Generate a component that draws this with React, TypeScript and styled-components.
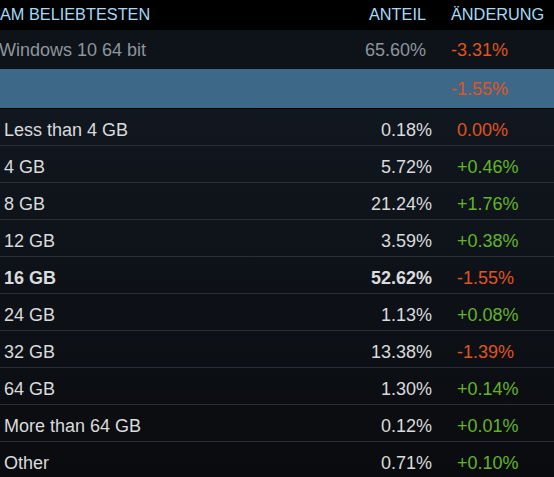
import { FC } from "react";
import styled, { createGlobalStyle } from "styled-components";

const GlobalStyle = createGlobalStyle`
  html, body {
    margin: 0;
    padding: 0;
    background: #0b0c0f;
  }
  body {
    font-family: "Liberation Sans", Arial, sans-serif;
    overflow: hidden;
  }
`;

const Page = styled.div`
  width: 554px;
  height: 477px;
  overflow: hidden;
  background: linear-gradient(to bottom, #131a23 0%, #0f141b 45%, #0a0b0e 100%);
`;

// top part of the table sits a few px further left than the list below
const Band = styled.div<{ $bg: string; $line?: string }>`
  background: ${(p) => p.$bg};
  border-bottom: ${(p) => (p.$line ? `1px solid ${p.$line}` : "none")};
`;

const Row = styled.div<{ $h: number; $shift?: number }>`
  display: grid;
  grid-template-columns: 1fr 100px 122px;
  align-items: center;
  box-sizing: border-box;
  height: ${(p) => p.$h}px;
  margin-left: ${(p) => -(p.$shift || 0)}px;
  margin-right: ${(p) => p.$shift || 0}px;
`;

const HeaderRow = styled(Row)`
  font-size: 16.3px;
  color: #a3dbf8;
  padding-bottom: 1px;
`;

const TopRow = styled(Row)`
  font-size: 18px;
  padding-top: 2px;
`;

const DataRow = styled(Row)`
  padding-top: 6px;
  font-size: 18px;
  border-bottom: 1px solid #2a2e34;
`;

const Label = styled.div<{ $color?: string; $bold?: boolean; $pad: number }>`
  padding-left: ${(p) => p.$pad}px;
  color: ${(p) => p.$color || "inherit"};
  font-weight: ${(p) => (p.$bold ? 700 : 400)};
  white-space: nowrap;
`;

const Share = styled.div<{ $color?: string; $bold?: boolean }>`
  text-align: right;
  color: ${(p) => p.$color || "inherit"};
  font-weight: ${(p) => (p.$bold ? 700 : 400)};
  white-space: nowrap;
`;

const Change = styled.div<{ $color?: string }>`
  padding-left: 25px;
  color: ${(p) => p.$color || "inherit"};
  white-space: nowrap;
`;

const RED = "#e0541f";
const GREEN = "#62b526";
const LIGHT = "#dadbdc";
const GREY = "#8d959d";

const tone = (v: string) => (v.startsWith("+") ? GREEN : RED);

const rows = [
  { name: "Less than 4 GB", share: "0.18%", change: "0.00%" },
  { name: "4 GB", share: "5.72%", change: "+0.46%" },
  { name: "8 GB", share: "21.24%", change: "+1.76%" },
  { name: "12 GB", share: "3.59%", change: "+0.38%" },
  { name: "16 GB", share: "52.62%", change: "-1.55%", bold: true },
  { name: "24 GB", share: "1.13%", change: "+0.08%" },
  { name: "32 GB", share: "13.38%", change: "-1.39%" },
  { name: "64 GB", share: "1.30%", change: "+0.14%" },
  { name: "More than 64 GB", share: "0.12%", change: "+0.01%" },
  { name: "Other", share: "0.71%", change: "+0.10%" },
];

const App: FC = () => {
  return (
    <>
      <GlobalStyle />
      <Page>
        <Band $bg="#000">
          <HeaderRow $h={30} $shift={6}>
            <Label $pad={6}>AM BELIEBTESTEN</Label>
            <Share>ANTEIL</Share>
            <Change>ÄNDERUNG</Change>
          </HeaderRow>
        </Band>
        <Band $bg="#0e131a">
          <TopRow $h={39} $shift={6}>
            <Label $pad={5} $color={GREY}>Windows 10 64 bit</Label>
            <Share $color={GREY}>65.60%</Share>
            <Change $color={RED}>-3.31%</Change>
          </TopRow>
        </Band>
        <Band $bg="#3d6887" $line="#000">
          <TopRow $h={39} $shift={6}>
            <Label $pad={5} />
            <Share />
            <Change $color={RED}>-1.55%</Change>
          </TopRow>
        </Band>
        {rows.map((r) => (
          <DataRow key={r.name} $h={37}>
            <Label $pad={4} $color={LIGHT} $bold={r.bold}>{r.name}</Label>
            <Share $color={LIGHT} $bold={r.bold}>{r.share}</Share>
            <Change $color={tone(r.change)}>{r.change}</Change>
          </DataRow>
        ))}
      </Page>
    </>
  );
};

export default App;
